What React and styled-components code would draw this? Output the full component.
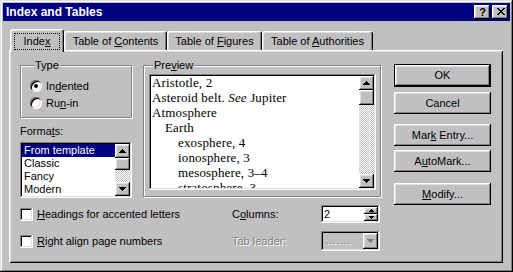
import React from 'react'
import styled, { createGlobalStyle, css } from 'styled-components'

const GlobalStyle = createGlobalStyle`
  html, body {
    margin: 0;
    padding: 0;
    background: #c0c0c0;
  }
  body {
    font-family: "Liberation Sans", Arial, sans-serif;
    font-size: 11px;
    color: #000;
  }
  * {
    box-sizing: border-box;
  }
`

const raised = css`
  background: #c0c0c0;
  box-shadow: inset -1px -1px #000, inset 1px 1px #fff, inset -2px -2px #808080,
    inset 2px 2px #dfdfdf;
`

const sunken = css`
  box-shadow: inset -1px -1px #fff, inset 1px 1px #808080, inset -2px -2px #dfdfdf,
    inset 2px 2px #000;
`

const FORMATS = ['From template', 'Classic', 'Fancy', 'Modern']

const PREVIEW = [
  { level: 0, text: 'Aristotle, 2' },
  {
    level: 0,
    text: (
      <>
        Asteroid belt. <i>See</i> Jupiter
      </>
    ),
  },
  { level: 0, text: 'Atmosphere' },
  { level: 1, text: 'Earth' },
  { level: 2, text: 'exosphere, 4' },
  { level: 2, text: 'ionosphere, 3' },
  { level: 2, text: 'mesosphere, 3–4' },
  { level: 2, text: 'stratosphere, 3' },
]

const ArrowUp = ({color = '#000'}) => (
  <svg width="7" height="4" viewBox="0 0 7 4" shapeRendering="crispEdges">
    <path fill={color} d="M3 0h1v1H3zM2 1h3v1H2zM1 2h5v1H1zM0 3h7v1H0z" />
  </svg>
)

const ArrowDown = ({color = '#000'}) => (
  <svg width="7" height="4" viewBox="0 0 7 4" shapeRendering="crispEdges">
    <path fill={color} d="M0 0h7v1H0zM1 1h5v1H1zM2 2h3v1H2zM3 3h1v1H3z" />
  </svg>
)

const TinyUp = () => (
  <svg width="5" height="3" viewBox="0 0 5 3" shapeRendering="crispEdges">
    <path fill="#000" d="M2 0h1v1H2zM1 1h3v1H1zM0 2h5v1H0z" />
  </svg>
)

const TinyDown = () => (
  <svg width="5" height="3" viewBox="0 0 5 3" shapeRendering="crispEdges">
    <path fill="#000" d="M0 0h5v1H0zM1 1h3v1H1zM2 2h1v1H2z" />
  </svg>
)

const CloseGlyph = () => (
  <svg width="8" height="7" viewBox="0 0 8 7" shapeRendering="crispEdges">
    <path
      fill="#000"
      d="M0 0h2v1H0zM6 0h2v1H6zM1 1h2v1H1zM5 1h2v1H5zM2 2h4v1H2zM3 3h2v1H3zM2 4h4v1H2zM1 5h2v1H1zM5 5h2v1H5zM0 6h2v1H0zM6 6h2v1H6z"
    />
  </svg>
)

const ScrollBar = ({thumb}) => (
  <Scroll>
    <ScrollButton>
      <ArrowUp />
    </ScrollButton>
    <Thumb $h={thumb} />
    <Track />
    <ScrollButton>
      <ArrowDown />
    </ScrollButton>
  </Scroll>
)

const App = () => (
  <>
    <GlobalStyle />
    <Window>
      <TitleBar>
        <Title>Index and Tables</Title>
        <CaptionButton>?</CaptionButton>
        <CaptionButton $close>
          <CloseGlyph />
        </CaptionButton>
      </TitleBar>

      <Body>
        <TabRow>
          <Tab $active $w={54}>
            <FocusRing>
              Inde<u>x</u>
            </FocusRing>
          </Tab>
          <Tab $w={103}>
            <span>Table of <u>C</u>ontents</span>
          </Tab>
          <Tab $w={95}>
            <span>Table of <u>F</u>igures</span>
          </Tab>
          <Tab $w={111}>
            <span>Table of <u>A</u>uthorities</span>
          </Tab>
        </TabRow>

        <Panel>
          <Main>
            <TopRow>
              <LeftCol>
                <TypeGroup>
                  <Legend>Type</Legend>
                  <RadioRow>
                    <Radio $checked />
                    <span>
                      In<u>d</u>ented
                    </span>
                  </RadioRow>
                  <RadioRow>
                    <Radio />
                    <span>
                      Ru<u>n</u>-in
                    </span>
                  </RadioRow>
                </TypeGroup>

                <FieldLabel>
                  Forma<u>t</u>s:
                </FieldLabel>
                <ListBox>
                  <ListItems>
                    {FORMATS.map((f, i) => (
                      <ListItem key={f} $selected={i === 0}>
                        {f}
                      </ListItem>
                    ))}
                  </ListItems>
                  <ScrollBar thumb={12} />
                </ListBox>
              </LeftCol>

              <PreviewGroup>
                <Legend>
                  Pre<u>v</u>iew
                </Legend>
                <PreviewBox>
                  <PreviewText>
                    {PREVIEW.map((line, i) => (
                      <PreviewLine key={i} $level={line.level}>
                        {line.text}
                      </PreviewLine>
                    ))}
                  </PreviewText>
                  <ScrollBar thumb={15} />
                </PreviewBox>
              </PreviewGroup>
            </TopRow>

            <Options>
              <CheckRow>
                <CheckBox />
                <span>
                  <u>H</u>eadings for accented letters
                </span>
              </CheckRow>
              <OptionLabel>
                C<u>o</u>lumns:
              </OptionLabel>
              <SpinBox>
                <SpinValue>2</SpinValue>
                <Spinner>
                  <SpinButton>
                    <TinyUp />
                  </SpinButton>
                  <SpinButton>
                    <TinyDown />
                  </SpinButton>
                </Spinner>
              </SpinBox>

              <CheckRow>
                <CheckBox />
                <span>
                  <u>R</u>ight align page numbers
                </span>
              </CheckRow>
              <OptionLabel $disabled>Tab leader:</OptionLabel>
              <Combo>
                <ComboValue>.......</ComboValue>
                <DropButton>
                  <ArrowDown color="#808080" />
                </DropButton>
              </Combo>
            </Options>
          </Main>

          <ButtonColumn>
            <PushButton $default>
              <span>OK</span>
            </PushButton>
            <PushButton $space={5}>
              <span>Cancel</span>
            </PushButton>
            <PushButton $space={10}>
              <span>Mar<u>k</u> Entry...</span>
            </PushButton>
            <PushButton $space={4}>
              <span>A<u>u</u>toMark...</span>
            </PushButton>
            <PushButton $space={11}>
              <span><u>M</u>odify...</span>
            </PushButton>
          </ButtonColumn>
        </Panel>
      </Body>
    </Window>
  </>
)

export default App

const Window = styled.div`
  width: 513px;
  height: 272px;
  padding: 3px;
  background: #c0c0c0;
  box-shadow: inset -1px -1px #000, inset 1px 1px #dfdfdf, inset -2px -2px #808080,
    inset 2px 2px #fff;
  display: flex;
  flex-direction: column;
`

const TitleBar = styled.div`
  height: 18px;
  background: #000080;
  display: flex;
  align-items: center;
  padding: 0 2px 0 3px;
  gap: 2px;
`

const Title = styled.div`
  flex: 1;
  color: #fff;
  font-weight: bold;
  font-size: 12px;
  line-height: 18px;
`

const CaptionButton = styled.div`
  ${raised};
  width: 16px;
  height: 14px;
  display: flex;
  align-items: center;
  justify-content: center;
  font-weight: bold;
  font-size: 11px;
  line-height: 14px;
  padding: ${props => (props.$close ? '0 0 1px 1px' : '0 0 0 1px')};
`

const Body = styled.div`
  flex: 1;
  padding: 8px 0 0 6px;
  display: flex;
  flex-direction: column;
`

const TabRow = styled.div`
  position: relative;
  z-index: 1;
  height: 23px;
  margin-bottom: -2px;
  padding-left: 1px;
  display: flex;
  align-items: flex-start;
`

const Tab = styled.div`
  width: ${props => props.$w}px;
  height: ${props => (props.$active ? 23 : 19)}px;
  margin-top: ${props => (props.$active ? 0 : 2)}px;
  background: #c0c0c0;
  border-radius: 3px 3px 0 0;
  border-top: 1px solid #fff;
  border-left: 1px solid #fff;
  border-right: 1px solid #000;
  box-shadow: inset -1px 0 #808080, inset 1px 1px #dfdfdf;
  display: flex;
  align-items: flex-start;
  justify-content: center;
  padding-top: 3px;
  line-height: 13px;
  white-space: nowrap;
`

const FocusRing = styled.span`
  border: 1px dotted #000;
  padding: 1px 9px;
  line-height: 13px;
`

const Panel = styled.div`
  width: 494px;
  height: 213px;
  padding: 9px 10px 0 11px;
  background: #c0c0c0;
  box-shadow: inset 1px 1px #fff, inset -1px -1px #000, inset 2px 2px #dfdfdf,
    inset -2px -2px #808080;
  display: flex;
  gap: 13px;
`

const Main = styled.div`
  width: 361px;
  display: flex;
  flex-direction: column;
`

const TopRow = styled.div`
  display: flex;
  gap: 11px;
  align-items: flex-start;
`

const LeftCol = styled.div`
  width: 112px;
  display: flex;
  flex-direction: column;
`

const groupBox = css`
  margin: 0;
  min-width: 0;
  border: 1px solid #808080;
  box-shadow: inset 1px 1px #fff, 1px 1px #fff;
`

const Legend = styled.legend`
  margin-left: 4px;
  padding: 0 1px;
  background: #c0c0c0;
  line-height: 13px;
`

const TypeGroup = styled.fieldset`
  ${groupBox};
  height: 59px;
  padding: 5px 0 0 9px;
`

const RadioRow = styled.div`
  height: 17px;
  display: flex;
  align-items: center;
  gap: 4px;
`

const Radio = styled.span`
  width: 12px;
  height: 12px;
  border-radius: 50%;
  background: #fff;
  box-shadow: inset 1px 1px #808080, inset -1px -1px #fff, inset 2px 2px #000,
    inset -2px -2px #dfdfdf;
  display: flex;
  align-items: center;
  justify-content: center;

  &::after {
    content: '';
    width: 4px;
    height: 4px;
    border-radius: 50%;
    background: #000;
    display: ${props => (props.$checked ? 'block' : 'none')};
  }
`

const FieldLabel = styled.div`
  margin-top: 7px;
  line-height: 13px;
`

const ListBox = styled.div`
  ${sunken};
  margin-top: 4px;
  height: 56px;
  padding: 2px;
  background: #fff;
  display: flex;
`

const ListItems = styled.div`
  flex: 1;
  display: flex;
  flex-direction: column;
`

const ListItem = styled.div`
  height: 13px;
  line-height: 13px;
  padding-left: 2px;
  background: ${props => (props.$selected ? '#000080' : 'transparent')};
  color: ${props => (props.$selected ? '#fff' : '#000')};
`

const Scroll = styled.div`
  width: 15px;
  display: flex;
  flex-direction: column;
`

const ScrollButton = styled.div`
  ${raised};
  height: 14px;
  display: flex;
  align-items: center;
  justify-content: center;
`

const Thumb = styled.div`
  ${raised};
  height: ${props => props.$h}px;
`

const Track = styled.div`
  flex: 1;
  background: repeating-conic-gradient(#c0c0c0 0 25%, #fff 0 50%) 0 0 / 2px 2px;
`

const PreviewGroup = styled.fieldset`
  ${groupBox};
  width: 238px;
  padding: 2px 4px 6px 5px;
`

const PreviewBox = styled.div`
  ${sunken};
  height: 116px;
  padding: 2px;
  background: #fff;
  display: flex;
`

const PreviewText = styled.div`
  flex: 1;
  overflow: hidden;
  padding: 0 0 0 1px;
  font-family: "Liberation Serif", "Times New Roman", serif;
  font-size: 13px;
  line-height: 15px;
  letter-spacing: 0.15px;
`

const PreviewLine = styled.div`
  padding-left: ${props => props.$level * 13}px;
  white-space: nowrap;
  position: relative;
  top: -1px;
`

const Options = styled.div`
  margin-top: 7px;
  display: grid;
  grid-template-columns: 212px 89px 59px;
  grid-template-rows: 18px 20px;
  row-gap: 8px;
  align-items: center;
`

const CheckRow = styled.div`
  display: flex;
  align-items: center;
  gap: 4px;
`

const CheckBox = styled.span`
  ${sunken};
  width: 13px;
  height: 13px;
  background: #fff;
`

const OptionLabel = styled.div`
  color: ${props => (props.$disabled ? '#808080' : '#000')};
  text-shadow: ${props => (props.$disabled ? '1px 1px #fff' : 'none')};
`

const SpinBox = styled.div`
  ${sunken};
  height: 18px;
  padding: 2px;
  background: #fff;
  display: flex;
  align-items: stretch;
`

const SpinValue = styled.div`
  flex: 1;
  line-height: 14px;
  padding-left: 1px;
`

const Spinner = styled.div`
  width: 14px;
  display: flex;
  flex-direction: column;
`

const SpinButton = styled.div`
  ${raised};
  flex: 1;
  display: flex;
  align-items: center;
  justify-content: center;
`

const Combo = styled.div`
  ${sunken};
  height: 20px;
  padding: 2px;
  background: #c0c0c0;
  display: flex;
`

const ComboValue = styled.div`
  flex: 1;
  padding-left: 3px;
  line-height: 14px;
  color: #808080;
  text-shadow: 1px 1px #fff;
  letter-spacing: 0.5px;
`

const DropButton = styled.div`
  ${raised};
  width: 15px;
  display: flex;
  align-items: center;
  justify-content: center;
`

const ButtonColumn = styled.div`
  width: 97px;
  margin-top: 5px;
  display: flex;
  flex-direction: column;
`

const PushButton = styled.div`
  ${raised};
  height: ${props => (props.$default ? 23 : 22)}px;
  margin-top: ${props => props.$space || 0}px;
  display: flex;
  align-items: center;
  justify-content: center;
  line-height: 13px;
  ${props =>
    props.$default &&
    css`
      box-shadow: inset 0 0 0 1px #000, inset -2px -2px #000, inset 2px 2px #fff,
        inset -3px -3px #808080, inset 3px 3px #dfdfdf;
    `}
`
